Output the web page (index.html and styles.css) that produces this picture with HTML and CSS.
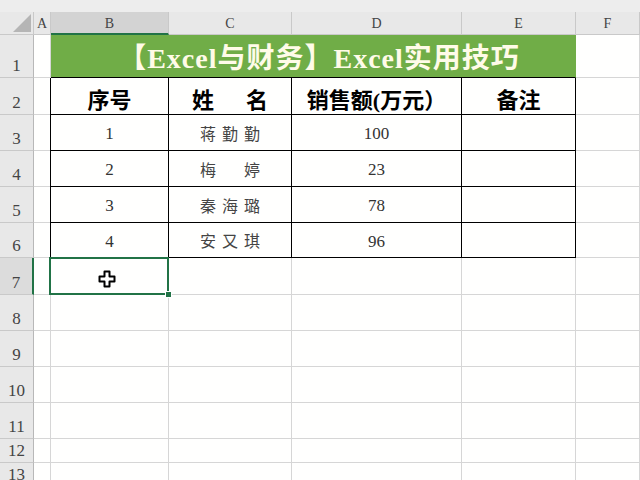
FILE: index.html
```html
<!DOCTYPE html>
<html lang="zh-CN">
<head>
<meta charset="UTF-8"/>
<title>Excel与财务</title>
<link rel="stylesheet" href="styles.css">
</head>
<body>
<div class="topbar"></div>
<div class="sheet">
  <div class="row hdr">
    <div class="c rh corner"><span class="tri"></span></div>
    <div class="c ca">A</div>
    <div class="c cb sel-col">B</div>
    <div class="c cc">C</div>
    <div class="c cd">D</div>
    <div class="c ce">E</div>
    <div class="c cf">F</div>
  </div>

  <div class="row r1">
    <div class="c rh">1</div>
    <div class="c ca"></div>
    <div class="c title">【Excel与财务】Excel实用技巧</div>
    <div class="c cf"></div>
  </div>

  <div class="row r2">
    <div class="c rh">2</div>
    <div class="c ca"></div>
    <div class="c cb t first th">序号</div>
    <div class="c cc t th name-h">姓　名</div>
    <div class="c cd t th">销售额(万元）</div>
    <div class="c ce t th">备注</div>
    <div class="c cf"></div>
  </div>

  <div class="row r3">
    <div class="c rh">3</div>
    <div class="c ca"></div>
    <div class="c cb t first num">1</div>
    <div class="c cc t name">蒋勤勤</div>
    <div class="c cd t num">100</div>
    <div class="c ce t"></div>
    <div class="c cf"></div>
  </div>

  <div class="row r4">
    <div class="c rh">4</div>
    <div class="c ca"></div>
    <div class="c cb t first num">2</div>
    <div class="c cc t name">梅　婷</div>
    <div class="c cd t num">23</div>
    <div class="c ce t"></div>
    <div class="c cf"></div>
  </div>

  <div class="row r5">
    <div class="c rh">5</div>
    <div class="c ca"></div>
    <div class="c cb t first num">3</div>
    <div class="c cc t name">秦海璐</div>
    <div class="c cd t num">78</div>
    <div class="c ce t"></div>
    <div class="c cf"></div>
  </div>

  <div class="row r6">
    <div class="c rh">6</div>
    <div class="c ca"></div>
    <div class="c cb t first num">4</div>
    <div class="c cc t name">安又琪</div>
    <div class="c cd t num">96</div>
    <div class="c ce t"></div>
    <div class="c cf"></div>
  </div>

  <div class="row r7">
    <div class="c rh sel-row">7</div>
    <div class="c ca"></div>
    <div class="c cb active">
      <span class="sel-box"><span class="handle"></span></span>
      <svg class="cursor" width="18" height="18" viewBox="0 0 18 18">
        <path d="M6.5 1.5h5v5h5v5h-5v5h-5v-5h-5v-5h5z" fill="#fff" stroke="#000" stroke-width="2" stroke-linejoin="round"/>
      </svg>
    </div>
    <div class="c cc"></div>
    <div class="c cd"></div>
    <div class="c ce"></div>
    <div class="c cf"></div>
  </div>

  <div class="row r8">
    <div class="c rh">8</div>
    <div class="c ca"></div><div class="c cb"></div><div class="c cc"></div>
    <div class="c cd"></div><div class="c ce"></div><div class="c cf"></div>
  </div>
  <div class="row r9">
    <div class="c rh">9</div>
    <div class="c ca"></div><div class="c cb"></div><div class="c cc"></div>
    <div class="c cd"></div><div class="c ce"></div><div class="c cf"></div>
  </div>
  <div class="row r10">
    <div class="c rh">10</div>
    <div class="c ca"></div><div class="c cb"></div><div class="c cc"></div>
    <div class="c cd"></div><div class="c ce"></div><div class="c cf"></div>
  </div>
  <div class="row r11">
    <div class="c rh">11</div>
    <div class="c ca"></div><div class="c cb"></div><div class="c cc"></div>
    <div class="c cd"></div><div class="c ce"></div><div class="c cf"></div>
  </div>
  <div class="row r12">
    <div class="c rh">12</div>
    <div class="c ca"></div><div class="c cb"></div><div class="c cc"></div>
    <div class="c cd"></div><div class="c ce"></div><div class="c cf"></div>
  </div>
  <div class="row r13">
    <div class="c rh">13</div>
    <div class="c ca"></div><div class="c cb"></div><div class="c cc"></div>
    <div class="c cd"></div><div class="c ce"></div><div class="c cf"></div>
  </div>
</div>
</body>
</html>
```

FILE: styles.css
```css
/* Base reset */
* {
  box-sizing: border-box;
}
html, body {
  margin: 0;
  padding: 0;
  width: 640px;
  height: 480px;
  overflow: hidden;
  background: #fffffe;
  font-family: 'Liberation Serif', 'Noto Sans CJK SC', serif;
  color: #333;
}
.topbar {
  height: 12px;
  background: #ededed;
}
.sheet {
  display: flex;
  flex-direction: column;
}
.row {
  display: flex;
}

/* Row heights */
.hdr { height: 23px; }
.r1 { height: 43px; }
.r2 { height: 37px; }
.r3, .r4, .r5 { height: 36px; }
.r6 { height: 35px; }
.r7 { height: 37px; }
.r8, .r9, .r10, .r11 { height: 36px; }
.r12 { height: 24px; }
.r13 { height: 18px; }

/* Cells & column widths */
.c {
  flex: none;
  border-right: 1px solid #d6d6d6;
  border-bottom: 1px solid #d6d6d6;
  display: flex;
  align-items: center;
  justify-content: center;
  position: relative;
}
.rh { width: 34px; }
.ca { width: 17px; }
.cb { width: 118px; }
.cc { width: 123px; }
.cd { width: 170px; }
.ce { width: 114px; }
.cf { flex: 1; }

/* Headers */
.hdr .c {
  background: #e8e8e8;
  border-color: #c9c9c9;
  font-size: 14px;
  color: #444;
  padding-top: 2px;
}
.hdr .sel-col {
  background: #d3d3d3;
  border-bottom: 2px solid #217346;
}
.rh {
  background: #e8e8e8;
  border-right-color: #b8b8b8;
  border-bottom-color: #c9c9c9;
  align-items: flex-end;
  padding-bottom: 3px;
  font-size: 17px;
  color: #444;
  line-height: 1;
}
.r13 .rh {
  align-items: flex-start;
  padding-top: 3px;
  padding-bottom: 0;
}
.rh.sel-row {
  background: #dcdcdc;
  border-right: 2px solid #217346;
}
.corner .tri {
  position: absolute;
  right: 2px;
  bottom: 2px;
  width: 0;
  height: 0;
  border-left: 18px solid transparent;
  border-bottom: 18px solid #b5b5b5;
}

/* Title band */
.title {
  width: 525px;
  background: #70ad47;
  border-right-color: #70ad47;
  border-bottom: 1px solid #000;
  color: #fffbe8;
  font-weight: bold;
  font-size: 28px;
  letter-spacing: 1px;
  padding-left: 12px;
}

/* Table body */
.t {
  border-right: 1px solid #000;
  border-bottom: 1px solid #000;
}
.t.first {
  box-shadow: -1px 0 0 #000;
}
.th {
  font-weight: bold;
  font-size: 22px;
  color: #000;
  padding-top: 3px;
}
.name-h {
  letter-spacing: 5px;
  padding-left: 5px;
}
.num {
  font-size: 17px;
  color: #333;
  padding-top: 3px;
}
.name {
  font-family: 'Noto Sans CJK SC', sans-serif;
  font-size: 16px;
  letter-spacing: 6px;
  padding-left: 6px;
  color: #444;
}

/* Active cell */
.active {
  z-index: 2;
}
.sel-box {
  position: absolute;
  left: -2px;
  top: -1px;
  right: -1px;
  bottom: -1px;
  border: 2px solid #217346;
}
.handle {
  position: absolute;
  right: -5px;
  bottom: -5px;
  width: 7px;
  height: 7px;
  background: #217346;
  border: 1px solid #fff;
}
.cursor {
  position: absolute;
  left: 47px;
  top: 12px;
}
```
